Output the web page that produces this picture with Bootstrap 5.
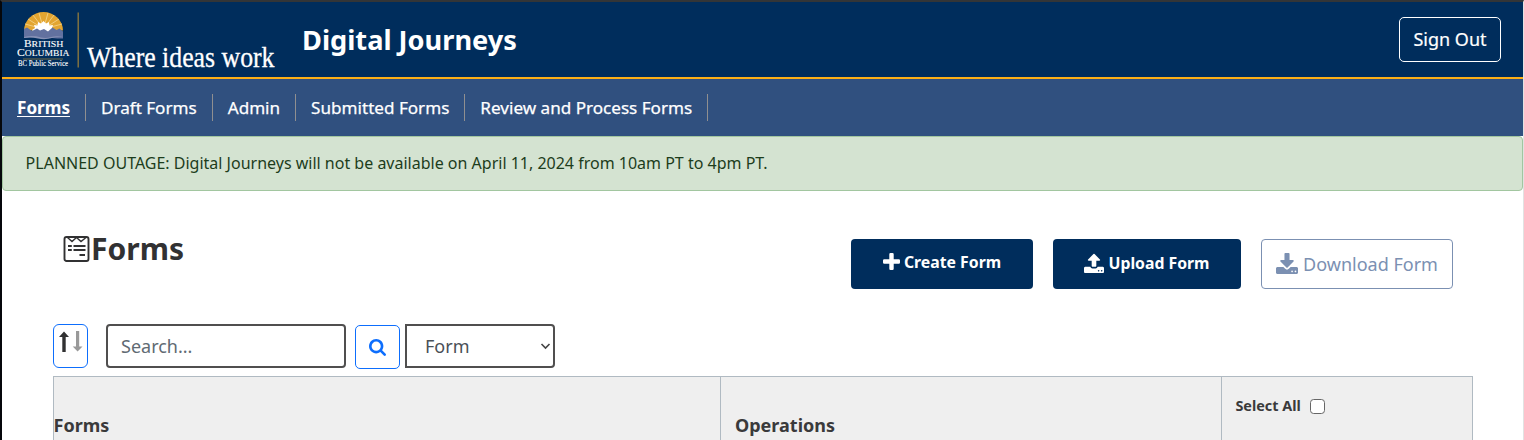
<!DOCTYPE html>
<html lang="en">
<head>
<meta charset="utf-8">
<meta name="viewport" content="width=device-width, initial-scale=1">
<title>Digital Journeys</title>
<link rel="stylesheet" href="https://cdn.jsdelivr.net/npm/bootstrap@5.3.0/dist/css/bootstrap.min.css">
<style>
body{font-family:"Noto Sans",sans-serif;color:#313132;height:440px;overflow:hidden;border-left:2px solid #05070b;border-top:2px solid #333537;border-right:1px solid #e2e2e2;background:#fff}
.topbar{height:77px;background:#002d5c;border-bottom:2px solid #fcaf17;padding:0 22px 0 15px}
.brand-title{font-size:27.2px;line-height:36px;margin-left:15px;margin-bottom:-1px}
.btn-signout{width:102px;height:45px;font-size:18px;border:1px solid #fff;color:#fff;padding:0;border-radius:5px;-webkit-text-stroke:.2px #fff}
.mainnav{height:57px;background:#30507f;font-size:17.1px}
.mainnav .nav-link{color:#fff;padding:0 15px;height:27px;line-height:28px;border-right:1px solid #8f8f90;white-space:nowrap;-webkit-text-stroke:.25px #fff}
.mainnav .nav-link.active{font-weight:700;text-decoration:underline;text-underline-offset:2px;text-decoration-thickness:1px;-webkit-text-stroke:0}
.outage{height:55px;background:#d4e3d1;border:1px solid #a2c6a0;color:#1d3d1c;font-size:16px;padding:0 22px 2px 22.6px;border-radius:4px;margin:0}
.page-title{font-size:30px;line-height:40px}
.btn-bc{height:50px;background:#002d5c;color:#fff;font-weight:700;font-size:15.8px;border-radius:4px;padding:0;border:0}
.btn-bc:hover{background:#002d5c;color:#fff}
.btn-dl{width:192px;height:50px;border:1px solid #7b90b2;color:#7b90b2;font-size:18px;border-radius:4px;padding:0}
.btn-sort{width:35px;height:44px;border:1px solid #0d6efd;border-radius:6px;padding:6px 0 0}
.search-box{width:240px;height:44px;border:2px solid #504f4f;border-radius:4px;font-size:18px;padding:0 13px}
.search-box::placeholder{color:#606a73}
.btn-find{width:45px;height:44px;border:1px solid #0d6efd;border-radius:5px;padding:1px 0 0;margin-top:1px}
.type-select{width:150px;height:44px;border:2px solid #504f4f;border-radius:0 4px 4px 0;font-size:18px;color:#495057;padding:0 18px;background-size:11px 8px;background-position:right 2px center;background-image:url("data:image/svg+xml,%3Csvg xmlns='http://www.w3.org/2000/svg' viewBox='0 0 11 8'%3E%3Cpath d='M1.5 2l4 4 4-4' fill='none' stroke='%23444' stroke-width='1.6'/%3E%3C/svg%3E")}
.forms-grid{display:grid;grid-template-columns:668px 501px 251px;width:1420px;height:64px;margin-left:51px;border-top:1px solid #b0bac2;background:#efefef;font-weight:700;font-size:18px;color:#3a3a3b}
.forms-grid>div{border-right:1px solid #b0bac2}
.forms-grid>div:first-child{border-left:1px solid #b0bac2}
.head-cell{padding-top:35px}
.select-all{font-size:14.4px;padding:18px 0 0 13.4px;line-height:22px}
.select-all input{width:15px;height:15px;border:1px solid #666;border-radius:3px;margin:4px 0 0 9px}
</style>
</head>
<body>
<header class="topbar d-flex align-items-center">
  <svg width="270" height="74" viewBox="0 -5 270 74" aria-label="British Columbia BC Public Service" role="img">
    <path d="M7 22.500A19.500 18.500 0 0 1 46 22.500Z" fill="#e3a530"/>
    <g stroke="#f6dc9c" stroke-width=".7"><path d="M26.500 21L11 11M26.500 21L16 7M26.500 21L22 5M26.500 21L31 5M26.500 21L37 7M26.500 21L42 11M26.500 21L8 16M26.500 21L45 16"/></g>
    <path d="M15 22l3-2-1-3 3.500.5L21 14l3 1.500L26.500 13l2.500 2.500 3-1.500.5 3.500 3.500-.5-1 3 3 2-3 4H18z" fill="#fff"/>
    <path d="M7 21l3-1.500 5 3.500 5-2.500 3 2 4-1.500 4 2.500 4.500-4 4 2.500 3-1.500 3.500 3v7q-6 0-11-.5-6 0-10 .5-9-2-18-.5z" fill="#62719f"/>
    <path d="M7 29q9-2 17 .5 5 1.200 10-.5 6-1.500 12 0-7-.5-11 1-7 2-14 .5-7-1.500-14-.5z" fill="#8791b5"/>
    <g fill="#fff" stroke="#fff" font-family="Liberation Serif, serif">
      <text x="7" y="38.500" font-size="9.800" stroke-width=".1" textLength="39.500" lengthAdjust="spacingAndGlyphs">B<tspan font-size="8.500">RITISH</tspan></text>
      <text x="0" y="47.500" font-size="11" stroke-width=".1" textLength="52.500" lengthAdjust="spacingAndGlyphs">C<tspan font-size="9">OLUMBIA</tspan></text>
      <text x="1" y="58" font-size="7.200" stroke-width=".1" textLength="50" lengthAdjust="spacingAndGlyphs">BC Public Service</text>
      <text x="70" y="58.500" font-size="29.500" stroke-width=".3" textLength="187.500" lengthAdjust="spacingAndGlyphs">Where ideas work</text>
    </g>
    <path d="M6 51H46" stroke="#927b3d" stroke-width=".8"/>
    <path d="M61.200 4.500V59.500" stroke="#927b3d" stroke-width="1.300"/>
  </svg>
  <h1 class="brand-title text-white fw-bold mt-0">Digital Journeys</h1>
  <button class="btn btn-signout ms-auto">Sign Out</button>
</header>
<nav class="mainnav nav align-items-center flex-nowrap">
  <a class="nav-link active" href="#">Forms</a>
  <a class="nav-link" href="#">Draft Forms</a>
  <a class="nav-link" href="#">Admin</a>
  <a class="nav-link" href="#">Submitted Forms</a>
  <a class="nav-link" href="#">Review and Process Forms</a>
</nav>
<div class="alert outage d-flex align-items-center" role="alert">PLANNED OUTAGE: Digital Journeys will not be available on April 11, 2024 from 10am PT to 4pm PT.</div>
<main>
  <div class="d-flex align-items-start" style="padding:38px 70px 0 61px;height:133px">
    <h2 class="page-title fw-bold d-flex align-items-center m-0">
      <svg width="27" height="28" viewBox="0 0 27 28" fill="none" stroke="#313132" style="margin-right:1px"><rect x="1.500" y="2" width="24" height="24" rx="2" stroke-width="1.900"/><path d="M4.500 2.500l4.500 4 4.500-4 4.500 4 5-4" stroke-width="1.400"/><path d="M5 11h3.800M10.500 11H22.500M5 15h3.800M10.500 15H22.500M16.500 20h5.500" stroke-width="1.900"/></svg>Forms
    </h2>
    <div class="d-flex ms-auto" style="gap:20px;margin-top:10px">
      <button class="btn btn-bc d-flex justify-content-center align-items-center" style="width:182px;padding-bottom:2px"><svg class="me-1 mb-1" width="17" height="17" viewBox="0 0 17 17" fill="#fff"><path d="M7.500 0h2q1.200 0 1.200 1.200v5.100h5.100q1.200 0 1.200 1.200v2q0 1.200-1.200 1.200h-5.100v5.100q0 1.200-1.200 1.200h-2q-1.200 0-1.200-1.200v-5.100H1.200Q0 10.700 0 9.500v-2q0-1.200 1.200-1.200h5.100V1.200Q6.300 0 7.500 0z"/></svg>Create Form</button>
      <button class="btn btn-bc d-flex justify-content-center align-items-center" style="width:188px"><svg width="20" height="20" viewBox="0 0 1664 1664" fill="#fff" style="margin:0 4px 2px 0"><path d="M1280 1472q0-26-19-45t-45-19-45 19-19 45 19 45 45 19 45-19 19-45zm256 0q0-26-19-45t-45-19-45 19-19 45 19 45 45 19 45-19 19-45zm128-224v320q0 40-28 68t-68 28h-1472q-40 0-68-28t-28-68v-320q0-40 28-68t68-28h427q21 56 70.500 92t110.500 36h256q61 0 110.500-36t70.500-92h427q40 0 68 28t28 68zm-325-648q-17 40-59 40h-256v448q0 26-19 45t-45 19h-256q-26 0-45-19t-19-45v-448h-256q-42 0-59-40-17-39 14-69l448-448q18-19 45-19t45 19l448 448q31 30 14 69z"/></svg>Upload Form</button>
      <button class="btn btn-dl d-flex justify-content-center align-items-center"><svg width="22" height="21" viewBox="0 0 1664 1536" fill="#7b90b2" preserveAspectRatio="none" style="margin:0 5px 2px 0"><path d="M1280 1344q0-26-19-45t-45-19-45 19-19 45 19 45 45 19 45-19 19-45zm256 0q0-26-19-45t-45-19-45 19-19 45 19 45 45 19 45-19 19-45zm128-224v320q0 40-28 68t-68 28h-1472q-40 0-68-28t-28-68v-320q0-40 28-68t68-28h465l135 136q58 56 136 56t136-56l136-136h464q40 0 68 28t28 68zm-325-569q17 41-14 70l-448 448q-18 19-45 19t-45-19l-448-448q-31-29-14-70 17-39 59-39h256v-448q0-26 19-45t45-19h256q26 0 45 19t19 45v448h256q42 0 59 39z"/></svg>Download Form</button>
    </div>
  </div>
  <div class="d-flex align-items-start" style="padding-left:51px;height:52px">
    <button class="btn btn-sort d-flex justify-content-center align-items-start" aria-label="Sort"><svg width="25" height="22" viewBox="0 0 25 22"><path d="M6 .500l5 5.500H7.700v15H4.300V6H1z" fill="#313132"/><path d="M18 0h3.200v15.500h3.300L19.600 20.500l-4.900-5H18z" fill="#999"/></svg></button>
    <input class="form-control search-box" style="margin:0 9px 0 18px" type="text" placeholder="Search...">
    <button class="btn btn-find d-flex justify-content-center align-items-center" style="margin-right:5px" aria-label="Search"><svg width="17" height="17" viewBox="0 0 1664 1664" fill="#0d6efd"><path d="M1152 704q0-185-131.500-316.500t-316.500-131.500-316.500 131.500-131.500 316.500 131.500 316.500 316.500 131.500 316.500-131.500 131.500-316.500zm512 832q0 52-38 90t-90 38q-54 0-90-38l-343-342q-179 124-399 124-143 0-273.500-55.500t-225-150-150-225-55.500-273.500 55.500-273.500 150-225 225-150 273.500-55.500 273.500 55.500 225 150 150 225 55.500 273.500q0 220-124 399l343 343q37 37 37 90z"/></svg></button>
    <select class="form-select type-select"><option>Form</option></select>
  </div>
  <div class="forms-grid">
    <div class="head-cell" style="text-indent:-.5px">Forms</div>
    <div class="head-cell" style="padding-left:14px">Operations</div>
    <div class="select-all d-flex align-items-start">Select All<input class="form-check-input" type="checkbox" aria-label="Select all"></div>
  </div>
</main>
<script src="https://cdn.jsdelivr.net/npm/bootstrap@5.3.0/dist/js/bootstrap.bundle.min.js"></script>
</body>
</html>
